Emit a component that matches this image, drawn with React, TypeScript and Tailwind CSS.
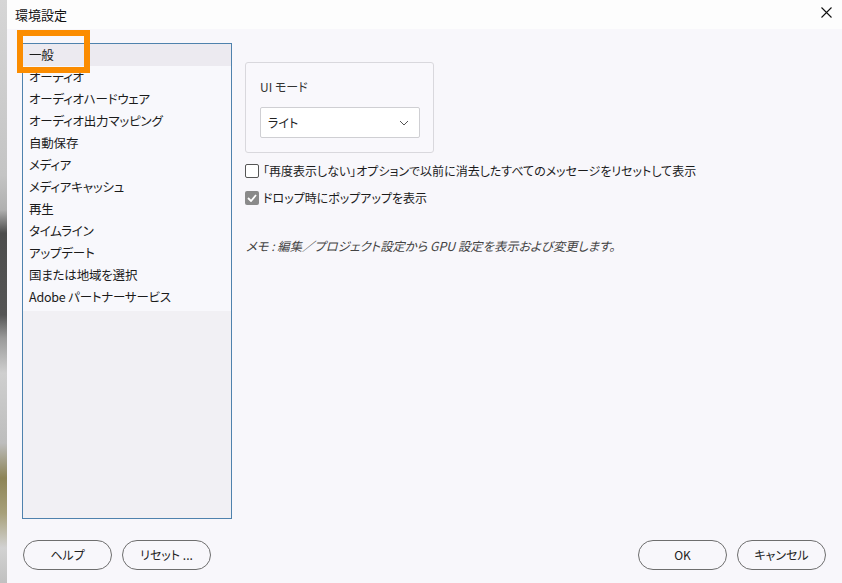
import React from "react";

const items = [
  "一般",
  "オーディオ",
  "オーディオハードウェア",
  "オーディオ出力マッピング",
  "自動保存",
  "メディア",
  "メディアキャッシュ",
  "再生",
  "タイムライン",
  "アップデート",
  "国または地域を選択",
  "Adobe パートナーサービス",
];

const font = "font-['Noto_Sans_CJK_JP','Noto_Sans',sans-serif] [font-feature-settings:'palt']";

function Btn({ label }: { label: string }) {
  return (
    <button className="w-[89px] h-[30px] rounded-full border border-[#6e6e6e] text-[12px] text-[#222] flex items-center justify-center bg-transparent">
      {label}
    </button>
  );
}

export default function App() {
  return (
    <div className={`w-[842px] h-[583px] flex overflow-hidden ${font}`}>
      <div className="w-[7px] h-full bg-[linear-gradient(to_bottom,#d6d6d6_0%,#c4c4c4_30%,#b0b0b0_36%,#4c4c4c_40%,#555_54%,#9a9a9a_58%,#cfcfcf_64%,#bdbdbd_76%,#8d8456_82%,#a7a07a_88%,#d2d2d2_94%,#c0c0c0_100%)]" />
      <div className="flex-1 flex flex-col bg-[#f8f7fb] relative">
        <div className="h-[29px] bg-[#fdfdfd] flex items-center justify-between pl-[8px] pr-[10px] text-[13px] text-[#111]">
          <span>環境設定</span>
          <svg width="11" height="11" viewBox="0 0 11 11" className="mb-[4px]">
            <path d="M0.5 0.5 L10.5 10.5 M10.5 0.5 L0.5 10.5" stroke="#111" strokeWidth="1.1" />
          </svg>
        </div>
        <div className="flex-1 flex flex-col px-[15px]">
          <div className="flex mt-[14px] gap-[13px]">
            <div className="w-[210px] h-[476px] border border-[#4f82ad] bg-[#f1f0f4] flex flex-col">
              <div className="bg-[#f8f8fc] pb-[3px]">
                {items.map((it, i) => (
                  <div
                    key={it}
                    className={`h-[22px] flex items-center pl-[6px] text-[12.5px] tracking-[-0.2px] text-[#1b1b1b] ${i === 0 ? "bg-[#eceaf0]" : ""}`}
                  >
                    {it}
                  </div>
                ))}
              </div>
            </div>
            <div className="flex flex-col pt-[19px]">
              <div className="w-[189px] h-[91px] border border-[#d9d8dd] rounded-[3px] bg-[#f9f8fc] px-[14px] pt-[16px]">
                <div className="text-[12px] text-[#333] h-[16px] leading-[16px]">UI モード</div>
                <div className="mt-[12px] w-[160px] h-[31px] bg-white border border-[#cfcfd3] rounded-[2px] flex items-center justify-between pl-[7px] pr-[10px] text-[12px] text-[#222]">
                  <span>ライト</span>
                  <svg width="10" height="6" viewBox="0 0 10 6">
                    <path d="M1 1 L5 5 L9 1" fill="none" stroke="#555" strokeWidth="1" />
                  </svg>
                </div>
              </div>
              <div className="mt-[10px] flex items-center gap-[4px] h-[16px] text-[12px] text-[#1b1b1b] whitespace-nowrap">
                <div className="w-[14px] h-[14px] border border-[#555] rounded-[2px] bg-white" />
                <span>「再度表示しない」オプションで以前に消去したすべてのメッセージをリセットして表示</span>
              </div>
              <div className="mt-[11px] flex items-center gap-[4px] h-[16px] text-[12px] text-[#1b1b1b] whitespace-nowrap">
                <div className="w-[14px] h-[14px] rounded-[2px] bg-[#8a8a8a] flex items-center justify-center">
                  <svg width="10" height="8" viewBox="0 0 10 8">
                    <path d="M1 4 L4 7 L9 1" fill="none" stroke="#fff" strokeWidth="1.8" />
                  </svg>
                </div>
                <span>ドロップ時にポップアップを表示</span>
              </div>
              <div className="mt-[31px] h-[16px] text-[12.3px] italic text-[#444] whitespace-nowrap pl-[1px]">
                メモ : 編集／プロジェクト設定から GPU 設定を表示および変更します。
              </div>
            </div>
          </div>
          <div className="mt-[21px] flex items-center justify-between pl-[1px] pr-[1px]">
            <div className="flex gap-[10px]">
              <Btn label="ヘルプ" />
              <Btn label="リセット ..." />
            </div>
            <div className="flex gap-[10px]">
              <Btn label="OK" />
              <Btn label="キャンセル" />
            </div>
          </div>
        </div>
        <div className="absolute left-[10px] top-[30px] w-[73px] h-[43px] border-[6px] border-[#fb8c00]" />
      </div>
    </div>
  );
}
